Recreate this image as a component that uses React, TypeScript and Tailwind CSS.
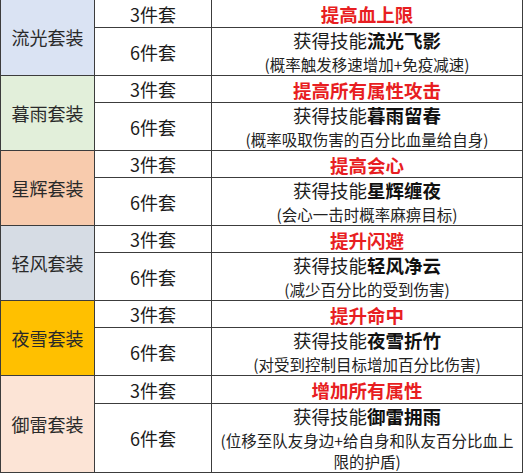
type SetRow = {
  name: string;
  bg: string;
  bonus: string;
  skill: string;
  desc: string[];
};

const SETS: SetRow[] = [
  { name: "流光套装", bg: "bg-[#dae3f3]", bonus: "提高血上限", skill: "流光飞影", desc: ["(概率触发移速增加+免疫减速)"] },
  { name: "暮雨套装", bg: "bg-[#e2efda]", bonus: "提高所有属性攻击", skill: "暮雨留春", desc: ["(概率吸取伤害的百分比血量给自身)"] },
  { name: "星辉套装", bg: "bg-[#f8cbad]", bonus: "提高会心", skill: "星辉缠夜", desc: ["(会心一击时概率麻痹目标)"] },
  { name: "轻风套装", bg: "bg-[#d6dce4]", bonus: "提升闪避", skill: "轻风净云", desc: ["(减少百分比的受到伤害)"] },
  { name: "夜雪套装", bg: "bg-[#ffc000]", bonus: "提升命中", skill: "夜雪折竹", desc: ["(对受到控制目标增加百分比伤害)"] },
  {
    name: "御雷套装",
    bg: "bg-[#fce4d6]",
    bonus: "增加所有属性",
    skill: "御雷拥雨",
    desc: ["(位移至队友身边+给自身和队友百分比血上", "限的护盾)"],
  },
];

export default function App() {
  return (
    <div className="w-[523px] h-[473px] bg-white font-['Noto_Sans_CJK_SC','Noto_Sans',sans-serif] text-[#1c1c1c]">
      {/* 表格线 = 网格间隙露出的深色底 */}
      <div className="grid h-full grid-cols-[93px_116px_1fr] grid-rows-[27px_47px_26px_47px_26px_47px_26px_47px_26px_47px_27px_68px] gap-px bg-[#3c3c3c] px-px pb-px">
        {SETS.map((s) => (
          <SetGroup key={s.name} set={s} />
        ))}
      </div>
    </div>
  );
}

function SetGroup({ set }: { set: SetRow }) {
  return (
    <>
      <div className={`row-span-2 flex items-center justify-center text-[18px] text-[#2a2a2a] ${set.bg}`}>
        {set.name}
      </div>
      <div className="flex items-center justify-center bg-white text-[18px] leading-none">3件套</div>
      <div className="flex items-center justify-center bg-white pt-[2px] text-[18.5px] font-bold leading-none text-[#e81e22]">
        {set.bonus}
      </div>
      <div className="flex items-center justify-center bg-white text-[18px] leading-none">6件套</div>
      <div className="flex flex-col items-center justify-center bg-white whitespace-nowrap">
        <div className="text-[18.5px] leading-[22px]">
          获得技能<span className="font-bold text-[#111]">{set.skill}</span>
        </div>
        <div className="mt-[3px] text-[15.5px] leading-[21px] text-[#222]">
          {set.desc.map((line) => (
            <div key={line} className="text-center">
              {line}
            </div>
          ))}
        </div>
      </div>
    </>
  );
}
